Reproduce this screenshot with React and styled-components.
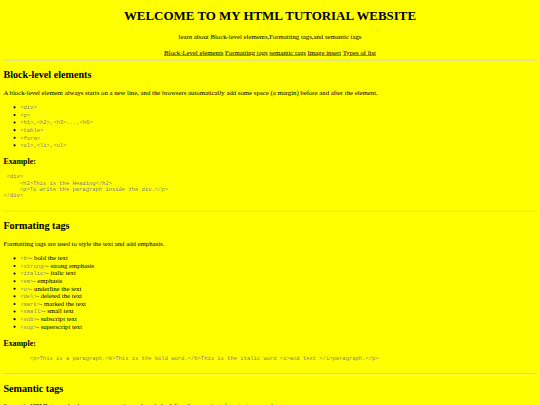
import React from "react";
import styled, { createGlobalStyle } from "styled-components";

const GlobalStyle = createGlobalStyle`
  html,
  body {
    margin: 0;
    overflow: hidden;
    background-color: yellow;
  }
`;

// laid out as a 1280px wide page, then shrunk to the 540px frame
const Page = styled.div`
  display: flow-root;
  box-sizing: border-box;
  width: 1280px;
  padding: 0 8px;
  transform: scale(0.421875);
  transform-origin: 0 0;
  color: black;
  font-family: "Liberation Serif", "Times New Roman", serif;
  font-size: 16px;
`;

const Header = styled.header`
  text-align: center;
`;

const Title = styled.h1`
  font-size: 30.7px;
  margin: 21.44px 0;
`;

const Tagline = styled.p`
  margin: 1em 0;
`;

const Nav = styled.nav`
  margin: 0;
  padding-top: 4px;
`;

const NavLink = styled.a`
  color: black;
  text-decoration: underline;
`;

const Divider = styled.hr`
  margin: 8px 0;
  height: 0;
  border: 0;
  border-top: 1px solid #9a9a9a;
  border-bottom: 1px solid #eeeeee;
`;

const Section = styled.section``;

const SectionTitle = styled.h2`
  font-size: 24px;
  margin: 0.83em 0;
`;

const Text = styled.p`
  margin: 1em 0;
`;

const List = styled.ul`
  margin: 1em 0;
  padding-left: 40px;
`;

const Code = styled.code`
  font-family: "Liberation Mono", "Courier New", monospace;
  font-size: 13px;
  color: gray;
`;

const SubTitle = styled.h3`
  font-size: 18.72px;
  margin: 1em 0;
`;

const CodeBlock = styled.pre`
  font-family: "Liberation Mono", "Courier New", monospace;
  font-size: 13px;
  color: gray;
  margin: 1em 0;
  tab-size: 8;
`;

const navItems = [
  ["#block", "Block-Level elements"],
  ["#formatting", "Formatting tags"],
  ["#semantic", "semantic tags"],
  ["#image", "Image insert"],
  ["#lists", "Types of list"]
];

const blockTags = [
  "<div>",
  "<p>",
  "<h1>,<h2>,<h3>...,<h6>",
  "<table>",
  "<form>",
  "<ol>,<li>,<ul>"
];

const formatTags = [
  ["<b>", "bold the text"],
  ["<strong>", "strong emphasis"],
  ["<italic>", "italic text"],
  ["<em>", "emphasis"],
  ["<u>", "underline the text"],
  ["<del>", "deleted the text"],
  ["<mark>", "marked the text"],
  ["<small>", "small text"],
  ["<sub>", "subscript text"],
  ["<sup>", "superscript text"]
];

// both examples keep the trailing blank line of the original markup
const blockExample = ` <div>
     <h2>This is the Heading</h2>
     <p>To write the paragraph inside the div.</p>
</div>
 `;

const formatExample =
  "\t<p>This is a paragraph.<b>This is the bold word.</b>This is the italic word <i>and text </i>paragraph.</p>\n ";

export default function App() {
  return (
    <Page>
      <GlobalStyle />
      <Header>
        <Title>WELCOME TO MY HTML TUTORIAL WEBSITE</Title>
        <Tagline>
          learn about Block-level elements,Formatting tags,and semantic tags
        </Tagline>
        <Nav>
          {navItems.map(([href, label], index) => (
            <React.Fragment key={href}>
              {index > 0 && " "}
              <NavLink href={href}>{label}</NavLink>
            </React.Fragment>
          ))}
        </Nav>
      </Header>
      <Divider />

      <Section id="block">
        <SectionTitle>Block-level elements</SectionTitle>
        <Text>
          A block-level element always starts on a new line, and the browsers
          automatically add some space (a margin) before and after the element.
        </Text>
        <List>
          {blockTags.map(tag => (
            <li key={tag}>
              <Code>{tag}</Code>
            </li>
          ))}
        </List>
        <SubTitle>Example:</SubTitle>
        <CodeBlock>{blockExample}</CodeBlock>
      </Section>
      <Divider />

      <Section id="formatting">
        <SectionTitle>Formating tags</SectionTitle>
        <Text>Formatting tags are used to style the text and add emphasis.</Text>
        <List>
          {formatTags.map(([tag, meaning]) => (
            <li key={tag}>
              <Code>{tag}</Code>- {meaning}
            </li>
          ))}
        </List>
        <SubTitle>Example:</SubTitle>
        <CodeBlock>{formatExample}</CodeBlock>
      </Section>
      <Divider />

      <Section id="semantic">
        <SectionTitle>Semantic tags</SectionTitle>
        <Text>
          Semantic HTML tags, also known as semantic markup, help define the
          meaning of content on a web page.
        </Text>
      </Section>
    </Page>
  );
}
